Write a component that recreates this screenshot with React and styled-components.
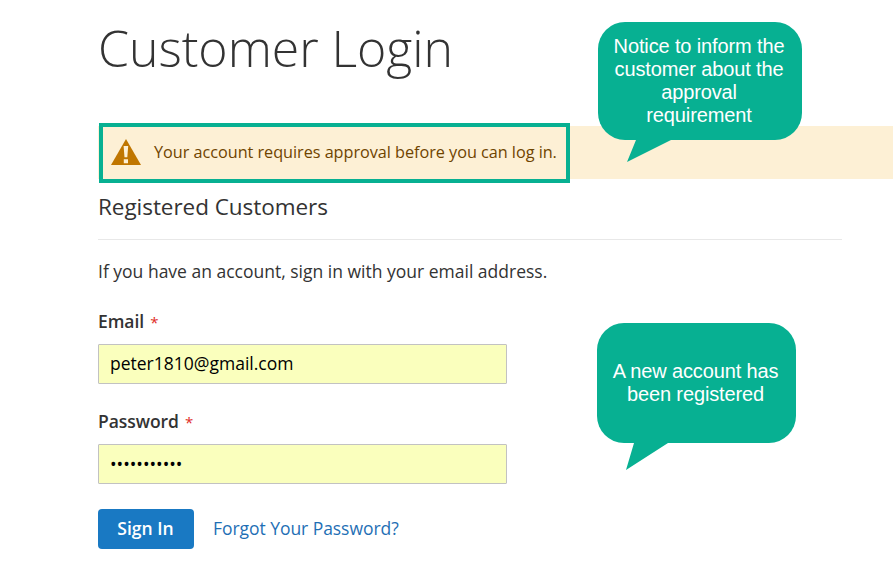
import React from 'react';
import styled, { createGlobalStyle } from 'styled-components';

const GlobalStyle = createGlobalStyle`
    * {
        box-sizing: border-box;
    }
    body {
        margin: 0;
        background: #fff;
        color: #333;
        font-family: 'Open Sans', 'Liberation Sans', sans-serif;
        font-size: 17.5px;
        overflow: hidden;
    }
`;

const Page = styled.main`
    position: relative;
    width: 893px;
    height: 561px;
    padding: 21px 0 0 98px;
    overflow: hidden;
`;

const Title = styled.h1`
    margin: 0 0 50px;
    font-size: 50px;
    font-weight: 300;
    letter-spacing: -0.05px;
    line-height: 55px;
`;

const Message = styled.div`
    position: relative;
    display: flex;
    align-items: center;
    gap: 13px;
    height: 53px;
    padding-left: 13px;
    background: #fdf0d5;
    color: #6f4400;
    font-size: 16.25px;
    letter-spacing: -0.04px;

    span {
        padding-bottom: 2px;
    }
`;

const Highlight = styled.div`
    position: absolute;
    top: -3px;
    left: 1px;
    width: 471px;
    height: 60px;
    border: 4px solid #07b092;
`;

const WarningIcon = styled.svg`
    display: block;
    width: 30px;
    height: 26px;
    margin-bottom: 1px;
`;

const Form = styled.form`
    width: 744px;
    padding-top: 14px;
`;

const Legend = styled.h2`
    margin: 0 0 19px;
    padding-bottom: 18px;
    border-bottom: 1px solid #e8e8e8;
    font-size: 22.5px;
    font-weight: 400;
    letter-spacing: -0.05px;
    line-height: 28px;
`;

const Note = styled.p`
    margin: 0 0 25px;
    font-size: 17.5px;
    font-weight: 400;
    line-height: 25px;
`;

const Field = styled.div`
    display: flex;
    flex-direction: column;
    gap: 10px;
    width: 409px;
    margin-bottom: 25px;
`;

const Label = styled.label`
    font-weight: 600;
    letter-spacing: -0.05px;
    line-height: 25px;
    height: 25px;

    span {
        margin-left: 6px;
        color: #e02b27;
        font-size: 15px;
        font-weight: 400;
    }
`;

const Input = styled.input`
    height: 40px;
    padding: ${({ type }) => (type === 'password' ? '0 11px' : '0 11px 2px')};
    border: 1px solid #c2c2c2;
    border-radius: 1px;
    outline: none;
    background: #faffbd;
    color: #000;
    font-family: inherit;
    font-size: 17.5px;
`;

const Actions = styled.div`
    display: flex;
    align-items: center;
    gap: 19px;
`;

const Button = styled.button`
    width: 96px;
    height: 40px;
    padding: 0 1px 2px 0;
    border: 0;
    border-radius: 4px;
    background: #1979c3;
    color: #fff;
    font-family: inherit;
    font-size: 17.5px;
    font-weight: 600;
`;

const Link = styled.a`
    padding-bottom: 2px;
    color: #1f6fb5;
    letter-spacing: -0.05px;
    text-decoration: none;
`;

const Callout = styled.div`
    position: absolute;
    top: ${({ $top }) => $top}px;
    left: ${({ $left }) => $left}px;
    display: flex;
    align-items: center;
    justify-content: center;
    width: ${({ $width }) => $width}px;
    height: ${({ $height }) => $height}px;
    padding-right: 2px;
    border-radius: 27px;
    background: #07b092;
    color: #fff;
    font-family: 'Liberation Sans', sans-serif;
    font-size: 20px;
    letter-spacing: -0.13px;
    line-height: 23px;
    text-align: center;
    white-space: pre-line;
`;

const Tail = styled.svg`
    position: absolute;
    top: calc(100% - 1px);
    left: 29px;
    width: 45px;
    height: ${({ $height }) => $height}px;
    fill: #07b092;
`;

const LoginField = ({ label, id, ...rest }) => (
    <Field>
        <Label htmlFor={id}>
            {label}
            <span>*</span>
        </Label>
        <Input id={id} {...rest} />
    </Field>
);

const App = () => {
    return (
        <>
            <GlobalStyle />
            <Page>
                <Title>Customer Login</Title>

                <Message>
                    <WarningIcon viewBox="0 0 30 26">
                        <path d="M15 0 30 26H0z" fill="#c07600" />
                        <path d="M12.6 7h4.6l-.9 11.2h-2.8zM12.8 20.3h4.2v3.9h-4.2z" fill="#fdf0d5" />
                    </WarningIcon>
                    <span>Your account requires approval before you can log in.</span>
                    <Highlight />
                </Message>

                <Form>
                    <Legend>Registered Customers</Legend>
                    <Note>If you have an account, sign in with your email address.</Note>
                    <LoginField label="Email" id="email" type="text" defaultValue="peter1810@gmail.com" />
                    <LoginField label="Password" id="password" type="password" defaultValue="peter181018" />
                    <Actions>
                        <Button type="button">Sign In</Button>
                        <Link href="#">Forgot Your Password?</Link>
                    </Actions>
                </Form>

                <Callout $top={22} $left={598} $width={204} $height={118}>
                    {'Notice to inform the\ncustomer about the\napproval\nrequirement'}
                    <Tail $height={23} viewBox="0 0 45 23">
                        <path d="M9 0h35v1L0 23 9 1z" />
                    </Tail>
                </Callout>
                <Callout $top={323} $left={597} $width={199} $height={120}>
                    {'A new account has\nbeen registered'}
                    <Tail $height={28} viewBox="0 0 45 28">
                        <path d="M8 0h34v1L0 28 8 1z" />
                    </Tail>
                </Callout>
            </Page>
        </>
    );
};

export default App;
